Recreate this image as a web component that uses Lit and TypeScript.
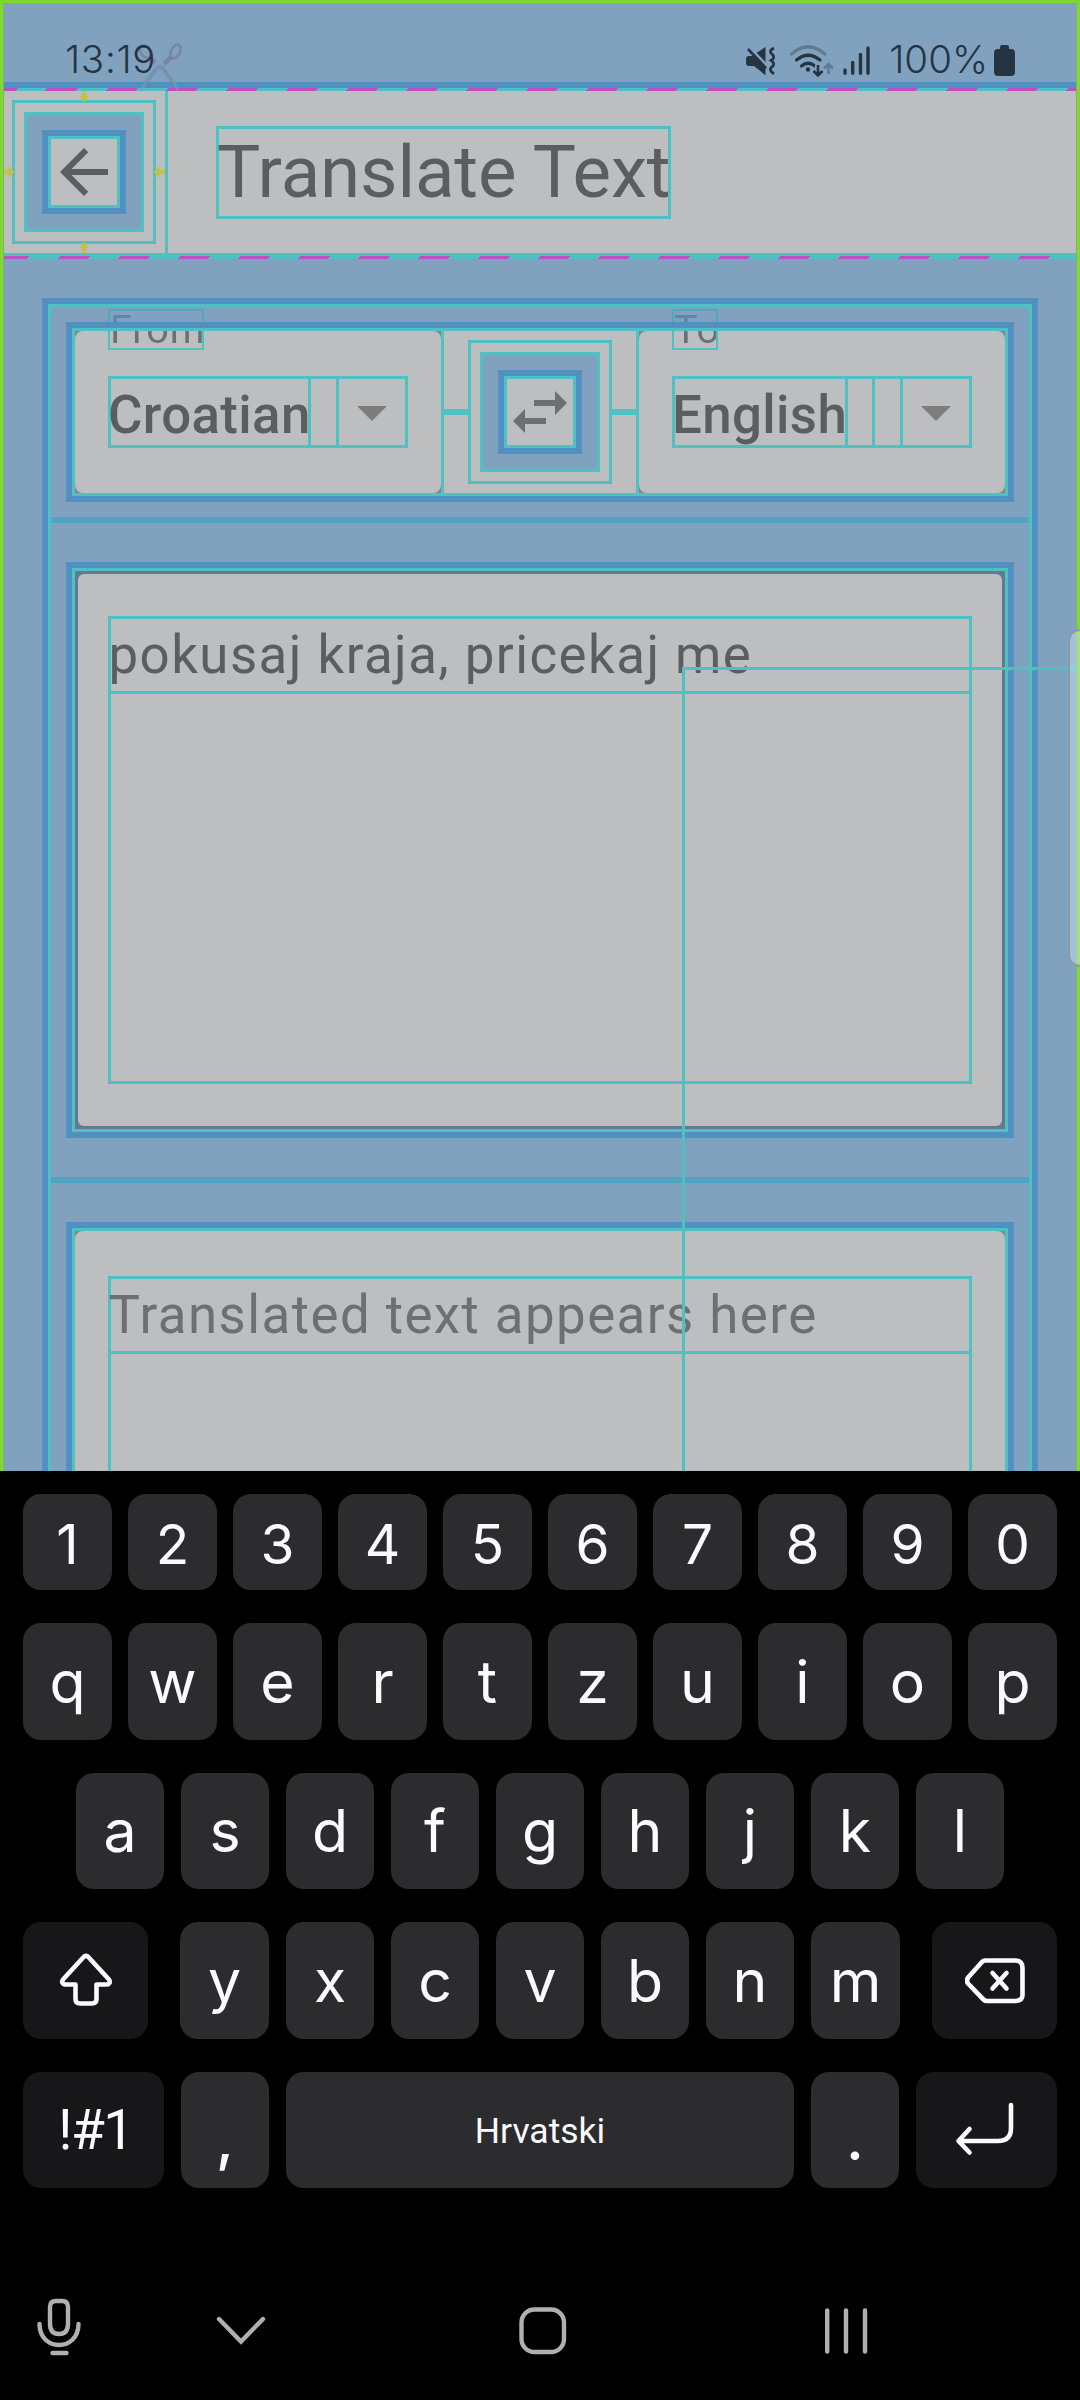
import { LitElement, html, css, svg } from "lit";
import { customElement, property } from "lit/decorators.js";

const base = css`
  *, *::before, *::after { box-sizing: border-box; }
`;

/* Icon inside nested layout guides: target, padding and content boxes. */
@customElement("guided-icon")
class GuidedIcon extends LitElement {
  @property() path = "";
  @property() tint = "#5c5d5f";
  static styles = [base, css`
    :host { display: block; width: 144px; height: 144px; flex: none; }
    .target { width: 144px; height: 144px; border: 3px solid #50c1c3; padding: 9px; }
    .pad { width: 120px; height: 120px; border: 3px solid #50c1c3; background: #80a2bf; padding: 15px; }
    .edge { width: 84px; height: 84px; border: 6px solid #5190c3; }
    .content { width: 72px; height: 72px; border: 3px solid #50c1c3; background: #bdbec0; }
    svg { display: block; width: 72px; height: 72px; margin: -3px; }
  `];
  render() {
    return html`<div class="target"><div class="pad"><div class="edge"><div class="content">
      <svg viewBox="0 0 24 24"><path fill=${this.tint} d=${this.path}></path></svg>
    </div></div></div></div>`;
  }
}

/* Language drop-down card. */
@customElement("language-card")
class LanguageCard extends LitElement {
  @property() label = "";
  @property() value = "";
  @property({ type: Number }) textWidth = 203;
  @property({ type: Number }) labelWidth = 96;
  @property({ type: Boolean }) extra = false;
  static styles = [base, css`
    :host { display: block; width: 366px; height: 162px; background: #848585; position: relative; flex: none; }
    .card { height: 162px; background: #bdbec0; border-radius: 8px; padding: 45px 33px; }
    .field { width: 300px; height: 72px; border: 3px solid #50c1c3; display: flex; }
    .value { height: 66px; border-right: 3px solid #50c1c3; margin-left: -3px; flex: none; white-space: nowrap;
      font: 500 52.8px/72px Roboto, sans-serif; letter-spacing: .36px; color: #5c5d5f; }
    .gap { width: 27px; border-right: 3px solid #50c1c3; flex: none; }
    .rest { flex: 1; border-right: 3px solid #50c1c3; }
    svg { width: 66px; height: 72px; margin: -3px 0; display: block; flex: none; }
    .label { position: absolute; left: 33px; top: -22px; height: 41px; border: 2px solid;
      font: 400 39.6px/37px Roboto, sans-serif; letter-spacing: .9px; color: transparent; white-space: nowrap;
      background: linear-gradient(#5f87aa 11px, #5190c3 11px 17px, #50c1c3 17px 20px, #6e6f73 20px);
      -webkit-background-clip: text; background-clip: text;
      border-image: linear-gradient(#53a5c2 13px, #5190c3 13px 19px, #50c1c3 19px) 2; }
  `];
  render() {
    return html`
      <div class="card"><div class="field">
        <div class="value" style="width:${this.textWidth}px">${this.value}</div>
        ${this.extra ? html`<div class="gap"></div>` : null}
        <div class="rest"></div>
        <svg viewBox="0 0 66 72"><path fill="#7d7d7d" d="M18 30h30L33 45z"></path></svg>
      </div></div>
      <div class="label" style="width:${this.labelWidth}px">${this.label}</div>`;
  }
}

const mute = svg`<g transform="translate(745 45)">
  <path fill="#263442" d="M1 14q0-3 3-3h4L20 22.500V30L10 21H4q-3 0-3-3z M11.500 8L20.500 2v15z"></path>
  <path fill="#263442" d="M20.500 18v12L9 21V9z"></path>
  <path stroke="#80a2bf" stroke-width="2.200" d="M6 3.500L23 22"></path>
  <path stroke="#263442" stroke-width="2.600" d="M3 4L21 23.500"></path>
  <path fill="none" stroke="#263442" stroke-width="2.800" d="M29 3q-6 3-2 6.200t-1 6.200q5 3.500 1 6.500t2 7"></path></g>`;

const wifi = svg`<g fill="none" stroke="#263442" stroke-width="3.200" stroke-linecap="round">
  <path stroke="#5f7b92" d="M791.500 54Q808 39.500 825 54"></path>
  <path d="M796.500 60Q808 50.500 820 60"></path>
  <path d="M801.500 66Q808 60.500 815 66"></path>
  <circle cx="808" cy="69.500" r="2.200" fill="#263442" stroke="none"></circle>
  <path stroke="#80a2bf" stroke-width="6" d="M818 66v8"></path>
  <path stroke-width="2.600" stroke-linecap="butt" d="M818 65v10M813.500 71l4.500 4.500 4.500-4.500"></path>
  <path stroke="#5f7b92" stroke-width="2.600" stroke-linecap="butt" d="M828.500 74V64M824 68.500l4.500-4.500 4.500 4.500"></path></g>`;

const bars = svg`<path stroke="#263442" stroke-width="3.400" stroke-linecap="round" d="M845 70v3.300M852.700 62.500v10.800M860.500 54.500v18.800M868 48v25.300"></path>
  <path fill="#263442" d="M1000 47q0-2 2-2h5q2 0 2 2v2h2q4 0 4 4v19q0 4-4 4h-13q-4 0-4-4V53q0-4 4-4h2z"></path>`;

const shiftIcon = html`<svg class="ic" viewBox="0 0 60 60"><path d="M27.200 6.500q2.800-3.200 5.600 0L53 28.500q1.600 2.200 0 4-1 1-2.500 1H40.500V48q0 4.500-4.500 4.500h-12q-4.500 0-4.500-4.500V33.500H9.500q-1.500 0-2.500-1-1.600-1.800 0-4z"></path></svg>`;
const deleteIcon = html`<svg class="ic" viewBox="0 0 60 60"><path d="M20 9.500h30q7.500 0 7.500 7.500v27q0 6-7.500 6H22q-2 0-3.500-1.500L3.500 33q-3-3.500 0-7L17 11q1.500-1.500 3-1.500z"></path><path d="M27.500 22l14 15.500M41.500 22l-14 15.500"></path></svg>`;
const enterIcon = html`<svg class="ic" viewBox="0 0 60 60"><path d="M56 5v23Q56 41 43 41H3.500M14.500 29L3.500 41l11 11.500"></path></svg>`;

@customElement("app-root")
class AppRoot extends LitElement {
  static styles = [base, css`
    :host { display: block; width: 1080px; height: 2400px; background: #000; overflow: hidden; font-family: Roboto, sans-serif; }
    .app { position: relative; height: 1471px; background: #80a2bf; overflow: hidden; display: flex; flex-direction: column; }
    .app > * { flex: none; }
    .status { height: 82px; display: flex; justify-content: space-between; padding: 0 92px 0 65px; color: #263442;
      font: 300 38.500px/118px Inter, sans-serif; }
    .status span { position: relative; z-index: 1; }
    .clock { letter-spacing: .7px; }
    .status svg { position: absolute; left: 0; top: 0; }
    .strip { height: 6px; background: #5190c3; }
    .dash { height: 3px; background: repeating-linear-gradient(135deg, #c04fc3 0 12.730px, #50c1c3 12.730px 33.940px, #c04fc3 33.940px 42.430px); }
    .dash.low { background: repeating-linear-gradient(135deg, #c04fc3 0 21.210px, #50c1c3 21.210px 42.430px); }
    .line { height: 3px; background: #50c1c3; }
    .bar { height: 162px; background: #bdbec0; display: flex; }
    .lead { position: relative; width: 168px; height: 162px; padding: 9px 9px 9px 12px; border-right: 3px solid #50c1c3; }
    .arrows { position: absolute; left: 0; top: 0; width: 168px; height: 162px; }
    .title { margin: 34.500px 0 0 48px; width: 455px; height: 93px; border: 3px solid #50c1c3; color: #5c5d5f;
      font: 400 72.600px/87px Roboto, sans-serif; white-space: nowrap; text-indent: -2px; letter-spacing: -.1px; }
    .body { margin: 39px 42px 0; height: 1300px; border: 6px solid #5190c3; }
    .body-in { height: 100%; border: 3px solid #50c1c3; padding-top: 15px; display: flex; flex-direction: column; }
    .body-in > * { flex: none; }
    .frame { margin: 0 15px; border: 6px solid #5190c3; }
    .frame-in { border: 3px solid #50c1c3; height: 100%; }
    .row { height: 180px; }
    .row .frame-in { display: flex; background: #bdbec0; align-items: center; }
    .v { width: 3px; height: 162px; background: #50c1c3; }
    .h { width: 24px; height: 6px; background: #50c1c3; }
    .spacer { height: 6px; background: #50a4c2; margin: 15px 0 39px; }
    .spacer.two { margin-top: 39px; }
    .panel { height: 576px; }
    .outline { height: 100%; background: #657a92; padding: 3px; }
    .sheet { height: 100%; background: #bdbec0; border-radius: 6px; padding: 42px 30px; }
    .grey { background: #848585; padding: 0; }
    .grey .sheet { border-radius: 8px; padding: 45px 33px; }
    .area { height: 468px; border: 3px solid #50c1c3; }
    .text { height: 75px; border-bottom: 3px solid #50c1c3; color: #5c5d5f; white-space: nowrap;
      font: 400 52.800px/72px Roboto, sans-serif; letter-spacing: 1.450px; text-indent: -2.500px; }
    .hint { color: #6e6f73; }
    .scissors { position: absolute; left: 130px; top: 38px; }
    .pointer { position: absolute; left: 682px; top: 667px; width: 393px; height: 820px; border: solid #50c1c3; border-width: 3px 0 0 3px; }
    .bounds { position: absolute; left: 0; top: 0; width: 1080px; height: 1480px; border: 3px solid #7fd92d; box-shadow: inset 0 0 0 1px #80b27c; }
    .handle { position: absolute; left: 1068px; top: 629px; width: 30px; height: 338px; border: 2px solid #8d9aa3; border-radius: 12px; background: rgba(225,245,255,.38); }
    .keys { height: 929px; padding: 23px 23px 0; display: flex; flex-direction: column; }
    .kr { display: flex; justify-content: space-between; }
    .r1 { height: 96px; margin-bottom: 33px; }
    .r2 { height: 117px; margin-bottom: 33px; }
    .r3 { height: 116px; padding: 0 53px; margin-bottom: 33px; }
    .r4 { height: 117px; margin-bottom: 33px; }
    .r5 { height: 116px; }
    .mid { display: flex; width: 720px; justify-content: space-between; }
    .k { width: 89px; height: 100%; border-radius: 18px; background: #2c2c2e; color: #fafaff; text-align: center;
      font: 400 59px/117px Inter, sans-serif; }
    .r1 .k { font-size: 55px; line-height: 100px; }
    .r3 .k { width: 88px; line-height: 116px; }
    .mid .k { width: 88px; }
    .mid .k:first-child, .mid .k:last-child { width: 89px; }
    .k.fn { background: #17171a; display: flex; align-items: center; justify-content: center; }
    .r4 .fn { width: 125px; }
    .r5 .fn { width: 141px; font: 400 55px/116px Roboto, sans-serif; letter-spacing: -1.500px; }
    .r5 .sym { padding-left: 4px; }
    .r5 .p { width: 88px; line-height: 134px; font-weight: 500; }
    .k.space { width: 508px; font: 400 35.500px/118px Roboto, sans-serif; }
    .ic { width: 60px; height: 60px; fill: none; stroke: #fafaff; stroke-width: 4.600; stroke-linecap: round; stroke-linejoin: round; }
    .r5 .ic { margin-left: -3px; }
    .nav { margin: 101px -23px 0; height: 80px; }
    .nav svg { display: block; }
  `];

  key(k: string) { return html`<div class="k">${k}</div>`; }

  render() {
    return html`
      <div class="app">
        <div class="status"><span class="clock">13:19</span><span>100%</span>
          <svg width="1080" height="92" viewBox="0 0 1080 92">${mute}${wifi}${bars}</svg>
        </div>
        <div class="strip"></div>
        <div class="dash"></div>
        <div class="bar">
          <div class="lead">
            <guided-icon path="M20 11H7.830l5.590-5.590L12 4l-8 8 8 8 1.410-1.410L7.830 13H20z"></guided-icon>
            <svg class="arrows" viewBox="0 0 168 162" fill="#c4c14b">
              <path d="M82 0h4v5h3.500L84 11l-5.500-6H82zM82 162h4v-5h3.500L84 151l-5.500 6H82zM3 79h5v-4l6.500 6L8 87v-4H3zM165 79h-5v-4l-6.500 6 6.500 6v-4h5z"></path>
            </svg>
          </div>
          <div class="title">Translate Text</div>
        </div>
        <div class="line"></div>
        <div class="dash low"></div>
        <div class="body"><div class="body-in">
          <div class="frame row"><div class="frame-in">
            <language-card label="From" value="Croatian" .textWidth=${203} .labelWidth=${96}></language-card>
            <div class="v"></div><div class="h"></div>
            <guided-icon tint="#6e6f73" path="M6.990 11L3 15l3.990 4v-3H14v-2H6.990v-3zM21 9l-3.990-4v3H10v2h7.010v3L21 9z"></guided-icon>
            <div class="h"></div><div class="v"></div>
            <language-card label="To" value="English" .textWidth=${176} .labelWidth=${46} ?extra=${true}></language-card>
          </div></div>
          <div class="spacer"></div>
          <div class="frame panel"><div class="frame-in"><div class="outline"><div class="sheet">
            <div class="area"><div class="text">pokusaj kraja, pricekaj me</div></div>
          </div></div></div></div>
          <div class="spacer two"></div>
          <div class="frame panel"><div class="frame-in"><div class="outline grey"><div class="sheet">
            <div class="area"><div class="text hint">Translated text appears here</div></div>
          </div></div></div></div>
        </div></div>
        <svg class="scissors" width="60" height="56" viewBox="130 38 60 56" fill="none">
          <path stroke="#6888a5" stroke-opacity=".55" stroke-width="4" d="M158 67L144 85M162 67l13 18"></path>
          <path stroke="#7d9db8" stroke-opacity=".6" stroke-width="2" d="M147 80l-6 11M173 80l5 11"></path>
          <g stroke="#7a7fa0" stroke-width="2.600" stroke-opacity=".85"><ellipse cx="145" cy="51.500" rx="4.500" ry="7" transform="rotate(-35 145 51.500)"></ellipse>
          <ellipse cx="175.500" cy="51.500" rx="4.300" ry="7.500" transform="rotate(28 175.500 51.500)"></ellipse>
          <path stroke-width="4.500" d="M150 58l5 5M171.500 57l-7.500 7"></path></g>
          <circle cx="160" cy="67" r="2.500" fill="#7594b0"></circle>
        </svg>
        <div class="pointer"></div>
        <div class="bounds"></div>
        <div class="handle"></div>
      </div>
      <div class="keys">
        <div class="kr r1">${[..."1234567890"].map(this.key)}</div>
        <div class="kr r2">${[..."qwertzuiop"].map(this.key)}</div>
        <div class="kr r3">${[..."asdfghjkl"].map(this.key)}</div>
        <div class="kr r4">
          <div class="k fn">${shiftIcon}</div>
          <div class="mid">${[..."yxcvbnm"].map(this.key)}</div>
          <div class="k fn">${deleteIcon}</div>
        </div>
        <div class="kr r5">
          <div class="k fn sym">!#1</div><div class="k p">,</div><div class="k space">Hrvatski</div><div class="k p">.</div>
          <div class="k fn">${enterIcon}</div>
        </div>
        <div class="nav">
          <svg width="1080" height="80" viewBox="0 2289 1080 80" fill="none" stroke="#b0b0b0" stroke-width="4.400" stroke-linecap="round" stroke-linejoin="round">
            <path d="M56 2301h6q6 0 6 6v17q0 10-9 10t-9-10v-17q0-6 6-6zM39.500 2324c0 28 39 28 39 0M52.500 2353h14"></path>
            <path stroke-linejoin="miter" d="M219 2319l22 22.500 22-22.500"></path>
            <rect x="521.500" y="2309.500" width="42.500" height="42.500" rx="13"></rect>
            <path d="M827.200 2310.500v41M846 2310.500v41M865 2310.500v41"></path>
          </svg>
        </div>
      </div>`;
  }
}
